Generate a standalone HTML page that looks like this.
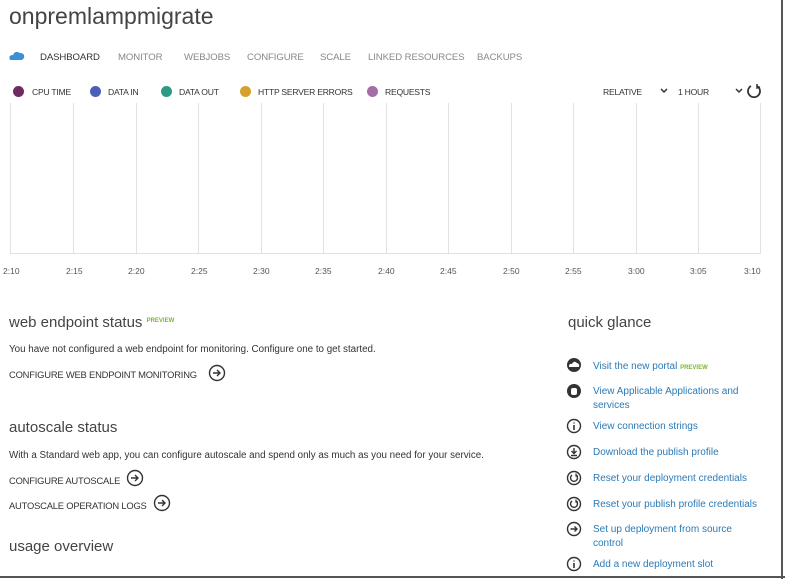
<!DOCTYPE html>
<html><head><meta charset="utf-8"><style>
body{margin:0;width:785px;height:579px;background:#fff;position:relative;overflow:hidden;font-family:"Liberation Sans",sans-serif;color:#333}
.a{position:absolute;white-space:nowrap}
.nav{font-size:9.6px;color:#888;top:52px;letter-spacing:-0.1px}
.lg{font-size:8.6px;color:#333;top:87px;letter-spacing:-0.25px}
.dot{position:absolute;width:11px;height:11px;border-radius:50%;top:86px}
.t{font-size:8.5px;color:#555;top:266px}
.h{font-size:15px;color:#444}
.p{font-size:9.8px;color:#333}
.u{font-size:9.4px;letter-spacing:-0.2px}
.ql{font-size:10px;color:#2a7ab8;line-height:13.5px}
.pv{font-size:6px;color:#7ab828;font-weight:bold}
svg.i{position:absolute}
</style></head><body>
<div class="a" style="left:9px;top:3px;font-size:23px;color:#444">onpremlampmigrate</div>
<svg class="a" style="left:8px;top:50px" width="18" height="12"><path d="M2 10 Q0 5 5 5 Q7 0 12 3 Q17 3 16 8 L14 10 Z" fill="#3b8ed8"/></svg>
<div class="a nav" style="left:40px;color:#333">DASHBOARD</div>
<div class="a nav" style="left:118px">MONITOR</div>
<div class="a nav" style="left:184px">WEBJOBS</div>
<div class="a nav" style="left:247px">CONFIGURE</div>
<div class="a nav" style="left:320px">SCALE</div>
<div class="a nav" style="left:368px">LINKED RESOURCES</div>
<div class="a nav" style="left:477px">BACKUPS</div>
<div class="dot" style="left:13px;background:#6e2b63"></div><div class="a lg" style="left:32px">CPU TIME</div>
<div class="dot" style="left:90px;background:#4a60b8"></div><div class="a lg" style="left:108px">DATA IN</div>
<div class="dot" style="left:161px;background:#2e9a86"></div><div class="a lg" style="left:179px">DATA OUT</div>
<div class="dot" style="left:240px;background:#d6a02c"></div><div class="a lg" style="left:258px">HTTP SERVER ERRORS</div>
<div class="dot" style="left:367px;background:#a36ea5"></div><div class="a lg" style="left:385px">REQUESTS</div>
<div class="a lg" style="left:603px">RELATIVE</div>
<svg class="i" style="left:660px;top:88px" width="8" height="6"><path d="M1 1 L4 4 L7 1" stroke="#333" stroke-width="1.5" fill="none"/></svg>
<div class="a lg" style="left:678px">1 HOUR</div>
<svg class="i" style="left:735px;top:88px" width="8" height="6"><path d="M1 1 L4 4 L7 1" stroke="#333" stroke-width="1.5" fill="none"/></svg>
<svg class="i" style="left:746px;top:83px" width="16" height="16"><path d="M5 3 A6 6 0 1 0 11 3" stroke="#333" stroke-width="1.8" fill="none"/><path d="M11 1 L11 5 L14 4" stroke="#333" stroke-width="1.5" fill="none"/></svg>
<svg class="a" style="left:0;top:100px" width="785" height="160">
<g stroke="#e2e2e2" stroke-width="1">
<line x1="10.5" y1="3" x2="10.5" y2="153"/><line x1="73.5" y1="3" x2="73.5" y2="153"/><line x1="136.5" y1="3" x2="136.5" y2="153"/><line x1="198.5" y1="3" x2="198.5" y2="153"/><line x1="261.5" y1="3" x2="261.5" y2="153"/><line x1="323.5" y1="3" x2="323.5" y2="153"/><line x1="386.5" y1="3" x2="386.5" y2="153"/><line x1="448.5" y1="3" x2="448.5" y2="153"/><line x1="511.5" y1="3" x2="511.5" y2="153"/><line x1="573.5" y1="3" x2="573.5" y2="153"/><line x1="636.5" y1="3" x2="636.5" y2="153"/><line x1="698.5" y1="3" x2="698.5" y2="153"/><line x1="760.5" y1="3" x2="760.5" y2="153"/>
<line x1="10" y1="153.5" x2="761" y2="153.5"/></g></svg>
<div class="a t" style="left:3px">2:10</div><div class="a t" style="left:66px">2:15</div><div class="a t" style="left:128px">2:20</div><div class="a t" style="left:191px">2:25</div><div class="a t" style="left:253px">2:30</div><div class="a t" style="left:315px">2:35</div><div class="a t" style="left:378px">2:40</div><div class="a t" style="left:440px">2:45</div><div class="a t" style="left:503px">2:50</div><div class="a t" style="left:565px">2:55</div><div class="a t" style="left:628px">3:00</div><div class="a t" style="left:690px">3:05</div><div class="a t" style="left:744px">3:10</div>
<div class="a h" style="left:9px;top:314px">web endpoint status <span class="pv" style="vertical-align:5px">PREVIEW</span></div>
<div class="a p" style="left:9px;top:344px">You have not configured a web endpoint for monitoring. Configure one to get started.</div>
<div class="a p u" style="left:9px;top:369px">CONFIGURE WEB ENDPOINT MONITORING</div>
<svg class="i" style="left:208px;top:364px" width="18" height="18"><circle cx="9" cy="9" r="7.5" stroke="#333" stroke-width="1.4" fill="none"/><path d="M5 9 H12 M9 6 L12 9 L9 12" stroke="#333" stroke-width="1.4" fill="none"/></svg>
<div class="a h" style="left:9px;top:419px">autoscale status</div>
<div class="a p" style="left:9px;top:450px">With a Standard web app, you can configure autoscale and spend only as much as you need for your service.</div>
<div class="a p u" style="left:9px;top:475px">CONFIGURE AUTOSCALE</div>
<svg class="i" style="left:126px;top:469px" width="18" height="18"><circle cx="9" cy="9" r="7.5" stroke="#333" stroke-width="1.4" fill="none"/><path d="M5 9 H12 M9 6 L12 9 L9 12" stroke="#333" stroke-width="1.4" fill="none"/></svg>
<div class="a p u" style="left:9px;top:500px">AUTOSCALE OPERATION LOGS</div>
<svg class="i" style="left:153px;top:494px" width="18" height="18"><circle cx="9" cy="9" r="7.5" stroke="#333" stroke-width="1.4" fill="none"/><path d="M5 9 H12 M9 6 L12 9 L9 12" stroke="#333" stroke-width="1.4" fill="none"/></svg>
<div class="a h" style="left:9px;top:538px">usage overview</div>
<div class="a h" style="left:568px;top:314px">quick glance</div>
<svg class="i" style="left:566px;top:357px" width="16" height="16"><circle cx="8" cy="8" r="7" fill="#333"/><path d="M3 10 Q3 6 6 7 Q8 3 11 6 Q14 7 13 10 Z" fill="#fff"/></svg>
<div class="a ql" style="left:593px;top:360px">Visit the new portal <span class="pv">PREVIEW</span></div>
<svg class="i" style="left:566px;top:383px" width="16" height="16"><circle cx="8" cy="8" r="7" fill="#333"/><rect x="5" y="5" width="6" height="7" rx="2" fill="#fff"/></svg>
<div class="a ql" style="left:593px;top:385px">View Applicable Applications and<br>services</div>
<svg class="i" style="left:566px;top:418px" width="16" height="16"><circle cx="8" cy="8" r="6.5" stroke="#333" stroke-width="1.4" fill="none"/><path d="M8 7 V12 M8 4.5 V5.5" stroke="#333" stroke-width="1.6"/></svg>
<div class="a ql" style="left:593px;top:420px">View connection strings</div>
<svg class="i" style="left:566px;top:444px" width="16" height="16"><circle cx="8" cy="8" r="6.5" stroke="#333" stroke-width="1.4" fill="none"/><path d="M8 4 V9 M5.5 7 L8 9.5 L10.5 7 M5 11.5 H11" stroke="#333" stroke-width="1.4" fill="none"/></svg>
<div class="a ql" style="left:593px;top:446px">Download the publish profile</div>
<svg class="i" style="left:566px;top:470px" width="16" height="16"><circle cx="8" cy="8" r="6.5" stroke="#333" stroke-width="1.4" fill="none"/><path d="M6 5 A3.5 3.5 0 1 0 10 5" stroke="#333" stroke-width="1.4" fill="none"/><path d="M10 3.5 V6 H12" stroke="#333" stroke-width="1.2" fill="none"/></svg>
<div class="a ql" style="left:593px;top:472px">Reset your deployment credentials</div>
<svg class="i" style="left:566px;top:496px" width="16" height="16"><circle cx="8" cy="8" r="6.5" stroke="#333" stroke-width="1.4" fill="none"/><path d="M6 5 A3.5 3.5 0 1 0 10 5" stroke="#333" stroke-width="1.4" fill="none"/><path d="M10 3.5 V6 H12" stroke="#333" stroke-width="1.2" fill="none"/></svg>
<div class="a ql" style="left:593px;top:498px">Reset your publish profile credentials</div>
<svg class="i" style="left:566px;top:521px" width="16" height="16"><circle cx="8" cy="8" r="6.5" stroke="#333" stroke-width="1.4" fill="none"/><path d="M4.5 8 H11 M8.5 5.5 L11 8 L8.5 10.5" stroke="#333" stroke-width="1.4" fill="none"/></svg>
<div class="a ql" style="left:593px;top:523px">Set up deployment from source<br>control</div>
<svg class="i" style="left:566px;top:556px" width="16" height="16"><circle cx="8" cy="8" r="6.5" stroke="#333" stroke-width="1.4" fill="none"/><path d="M8 7 V12 M8 4.5 V5.5" stroke="#333" stroke-width="1.6"/></svg>
<div class="a ql" style="left:593px;top:558px">Add a new deployment slot</div>
<div class="a" style="left:781px;top:0;width:2px;height:579px;background:#555"></div>
<div class="a" style="left:0;top:576px;width:785px;height:2px;background:#555"></div>
</body></html>
